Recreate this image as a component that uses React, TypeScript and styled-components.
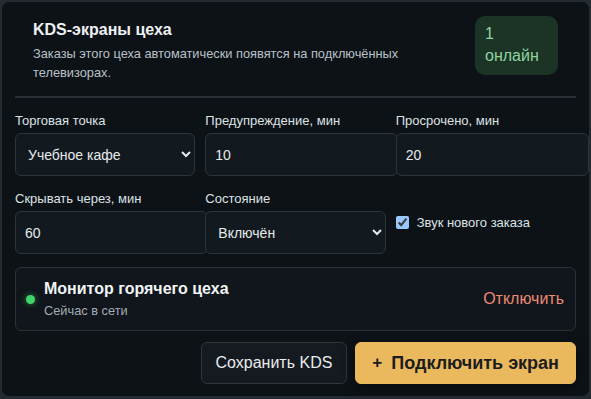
import { createGlobalStyle } from "styled-components"
import styled from "styled-components"

const GlobalStyle = createGlobalStyle`
  html, body {
    margin: 0;
    padding: 0;
    background: #232a31;
    color-scheme: dark;
  }
  body {
    padding: 1px 0 0 1px;
    font-family: "Liberation Sans", Arial, sans-serif;
  }
`

const Card = styled.section`
  box-sizing: border-box;
  width: 589px;
  height: 396px;
  padding: 0 13px;
  background: #0d1216;
  border: 1px solid #252c33;
  border-radius: 8px;
  display: flex;
  flex-direction: column;
`

const Header = styled.header`
  display: flex;
  justify-content: space-between;
  align-items: flex-start;
  gap: 16px;
  padding: 14px 18px 14px;
  border-bottom: 2px solid #262d34;
`

const HeaderText = styled.div`
  display: flex;
  flex-direction: column;
  gap: 5px;
  padding-top: 4px;
`

const Title = styled.h2`
  margin: 0;
  font-size: 16px;
  font-weight: 700;
  line-height: 19px;
  color: #eef1f4;
`

const Description = styled.p`
  margin: 0;
  width: 380px;
  font-size: 12.8px;
  line-height: 19px;
  color: #b9c1c9;
`

const Badge = styled.div`
  box-sizing: border-box;
  width: 83px;
  padding: 7px 10px 8px;
  background: #1b3425;
  color: #8fd3a1;
  border-radius: 10px;
  font-size: 16px;
  line-height: 22px;
`

const FieldGrid = styled.div`
  display: grid;
  grid-template-columns: repeat(3, 1fr);
  column-gap: 10px;
  row-gap: 15px;
  margin-top: 15px;
`

const Field = styled.label`
  display: flex;
  flex-direction: column;
  gap: 5px;
  min-width: 0;
`

const FieldLabel = styled.span`
  font-size: 13px;
  line-height: 15px;
  color: #dde2e7;
`

const controlBase = `
  box-sizing: border-box;
  height: 43px;
  background: #131a1f;
  border: 1px solid #2c343c;
  border-radius: 6px;
  color: #e7eaed;
  font-family: "Liberation Sans", Arial, sans-serif;
  font-size: 14px;
  outline: none;
`

const TextInput = styled.input`
  ${controlBase}
  width: 193px;
  padding: 0 9px;
`

const Select = styled.select`
  ${controlBase}
  width: 100%;
  padding: 0 6px 0 8px;
`

const CheckField = styled.label`
  display: flex;
  align-items: center;
  gap: 8px;
  align-self: center;
  font-size: 13px;
  color: #dde2e7;
`

const Checkbox = styled.input`
  margin: 0;
  width: 13px;
  height: 13px;
`

const Monitor = styled.div`
  display: flex;
  align-items: center;
  gap: 9px;
  margin-top: 13px;
  padding: 11px 11px 11px 10px;
  background: #10161b;
  border: 1px solid #2a3239;
  border-radius: 6px;
`

const Dot = styled.span<{ $online: boolean }>`
  width: 9px;
  height: 9px;
  border-radius: 50%;
  background: ${({ $online }) => ($online ? "#3fd56b" : "#6b7280")};
  box-shadow: 0 0 6px
    ${({ $online }) => ($online ? "rgba(63, 213, 107, 0.55)" : "transparent")};
  flex-shrink: 0;
`

const MonitorText = styled.div`
  display: flex;
  flex-direction: column;
  gap: 5px;
  flex: 1;
`

const MonitorName = styled.div`
  font-size: 16px;
  font-weight: 700;
  line-height: 19px;
  color: #f1f3f5;
`

const MonitorStatus = styled.div`
  font-size: 12.8px;
  line-height: 16px;
  color: #a4acb4;
`

const LinkButton = styled.button`
  padding: 0;
  border: none;
  background: transparent;
  color: #ec8a73;
  font-family: "Liberation Sans", Arial, sans-serif;
  font-size: 16px;
  cursor: pointer;
`

const Actions = styled.div`
  display: flex;
  justify-content: flex-end;
  gap: 8px;
  margin-top: 11px;
`

const Button = styled.button<{ $primary?: boolean }>`
  display: flex;
  align-items: center;
  gap: 9px;
  box-sizing: border-box;
  height: 42px;
  padding: 0 ${({ $primary }) => ($primary ? "16px" : "14px")};
  border-radius: 6px;
  border: 1px solid ${({ $primary }) => ($primary ? "#eab95e" : "#2e363e")};
  background: ${({ $primary }) => ($primary ? "#eab95e" : "#141a1f")};
  color: ${({ $primary }) => ($primary ? "#1b1c1e" : "#e9ecef")};
  font-family: "Liberation Sans", Arial, sans-serif;
  font-size: ${({ $primary }) => ($primary ? "18px" : "16px")};
  font-weight: ${({ $primary }) => ($primary ? 700 : 400)};
  box-shadow: ${({ $primary }) =>
    $primary ? "0 4px 14px rgba(0, 0, 0, 0.35)" : "none"};
  cursor: pointer;
`

const PlusIcon = styled.span`
  font-size: 17px;
  font-weight: 700;
`

export default function App() {
  return (
    <>
      <GlobalStyle />
      <Card>
        <Header>
          <HeaderText>
            <Title>KDS-экраны цеха</Title>
            <Description>
              Заказы этого цеха автоматически появятся на подключённых
              телевизорах.
            </Description>
          </HeaderText>
          <Badge>1 онлайн</Badge>
        </Header>

        <FieldGrid>
          <Field>
            <FieldLabel>Торговая точка</FieldLabel>
            <Select defaultValue="cafe">
              <option value="cafe">Учебное кафе</option>
            </Select>
          </Field>
          <Field>
            <FieldLabel>Предупреждение, мин</FieldLabel>
            <TextInput defaultValue="10" />
          </Field>
          <Field>
            <FieldLabel>Просрочено, мин</FieldLabel>
            <TextInput defaultValue="20" />
          </Field>
          <Field>
            <FieldLabel>Скрывать через, мин</FieldLabel>
            <TextInput defaultValue="60" />
          </Field>
          <Field>
            <FieldLabel>Состояние</FieldLabel>
            <Select defaultValue="on">
              <option value="on">Включён</option>
              <option value="off">Выключен</option>
            </Select>
          </Field>
          <CheckField>
            <Checkbox type="checkbox" defaultChecked />
            Звук нового заказа
          </CheckField>
        </FieldGrid>

        <Monitor>
          <Dot $online />
          <MonitorText>
            <MonitorName>Монитор горячего цеха</MonitorName>
            <MonitorStatus>Сейчас в сети</MonitorStatus>
          </MonitorText>
          <LinkButton>Отключить</LinkButton>
        </Monitor>

        <Actions>
          <Button>Сохранить KDS</Button>
          <Button $primary>
            <PlusIcon>+</PlusIcon>
            Подключить экран
          </Button>
        </Actions>
      </Card>
    </>
  )
}
